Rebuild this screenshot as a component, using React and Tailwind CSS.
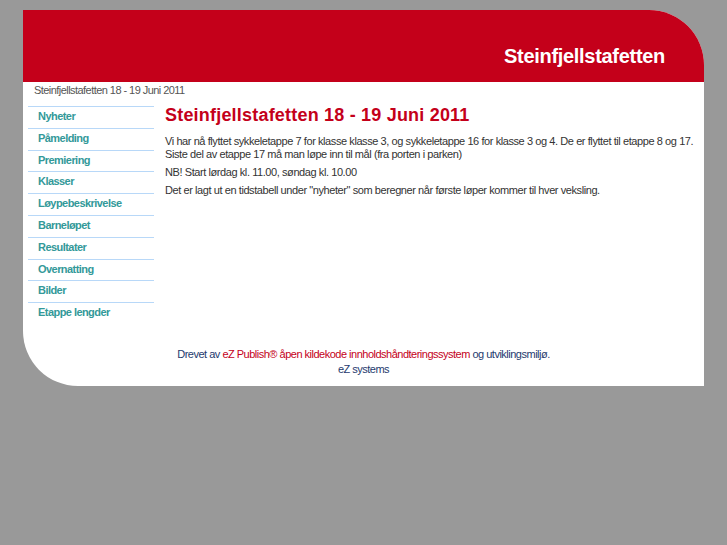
import React from 'react';

const menu = ['Nyheter', 'Påmelding', 'Premiering', 'Klasser', 'Løypebeskrivelse', 'Barneløpet', 'Resultater', 'Overnatting', 'Bilder', 'Etappe lengder'];

export default function App() {
    return (
        <div className="min-h-[545px] bg-[#999999] pt-[10px] pl-[23px] pr-[23px]" style={{ fontFamily: '"Liberation Sans", Arial, sans-serif' }}>
            <div className="w-[681px] bg-white rounded-tr-[55px] rounded-bl-[55px] overflow-hidden h-[376px] flex flex-col">
                <div className="bg-[#c4001a] h-[72px] flex items-end justify-end pr-[39px] pb-[16px]">
                    <span className="text-white font-bold text-[20px] leading-none tracking-[-0.3px]">Steinfjellstafetten</span>
                </div>
                <div className="text-[11px] text-[#555] pl-[11px] pt-[1px] leading-[14px] tracking-[-0.55px]">Steinfjellstafetten 18 - 19 Juni 2011</div>
                <div className="flex pt-[9px]">
                    <ul className="w-[126px] ml-[5px] flex-none">
                        {menu.map((m) => (
                            <li key={m} className="border-t border-[#b8d8f8] h-[21.8px] pl-[10px] pt-[2px] text-[11px] font-bold text-[#339999] leading-[14px] tracking-[-0.55px]">{m}</li>
                        ))}
                    </ul>
                    <div className="ml-[11px] flex-1 pr-[10px]">
                        <h1 className="text-[#c4001a] font-bold text-[18px] leading-[20px] mt-[-1px] tracking-[0.2px]">Steinfjellstafetten 18 - 19 Juni 2011</h1>
                        <div className="text-[11px] text-[#333] leading-[13px] tracking-[-0.42px] mt-[10px]">
                            <p>Vi har nå flyttet sykkeletappe 7 for klasse klasse 3, og sykkeletappe 16 for klasse 3 og 4. De er flyttet til etappe 8 og 17. Siste del av etappe 17 må man løpe inn til mål (fra porten i parken)</p>
                            <p className="mt-[5px]">NB! Start lørdag kl. 11.00, søndag kl. 10.00</p>
                            <p className="mt-[5px]">Det er lagt ut en tidstabell under "nyheter" som beregner når første løper kommer til hver veksling.</p>
                        </div>
                    </div>
                </div>
                <div className="mt-auto pb-[9px] text-center text-[11px] leading-[15px] tracking-[-0.5px]">
                    <div className="text-[#1e3a6e]">Drevet av <span className="text-[#c4001a]">eZ Publish® åpen kildekode innholdshåndteringssystem</span> og utviklingsmiljø.</div>
                    <div className="text-[#1e3a6e]">eZ systems</div>
                </div>
            </div>
        </div>
    );
}
